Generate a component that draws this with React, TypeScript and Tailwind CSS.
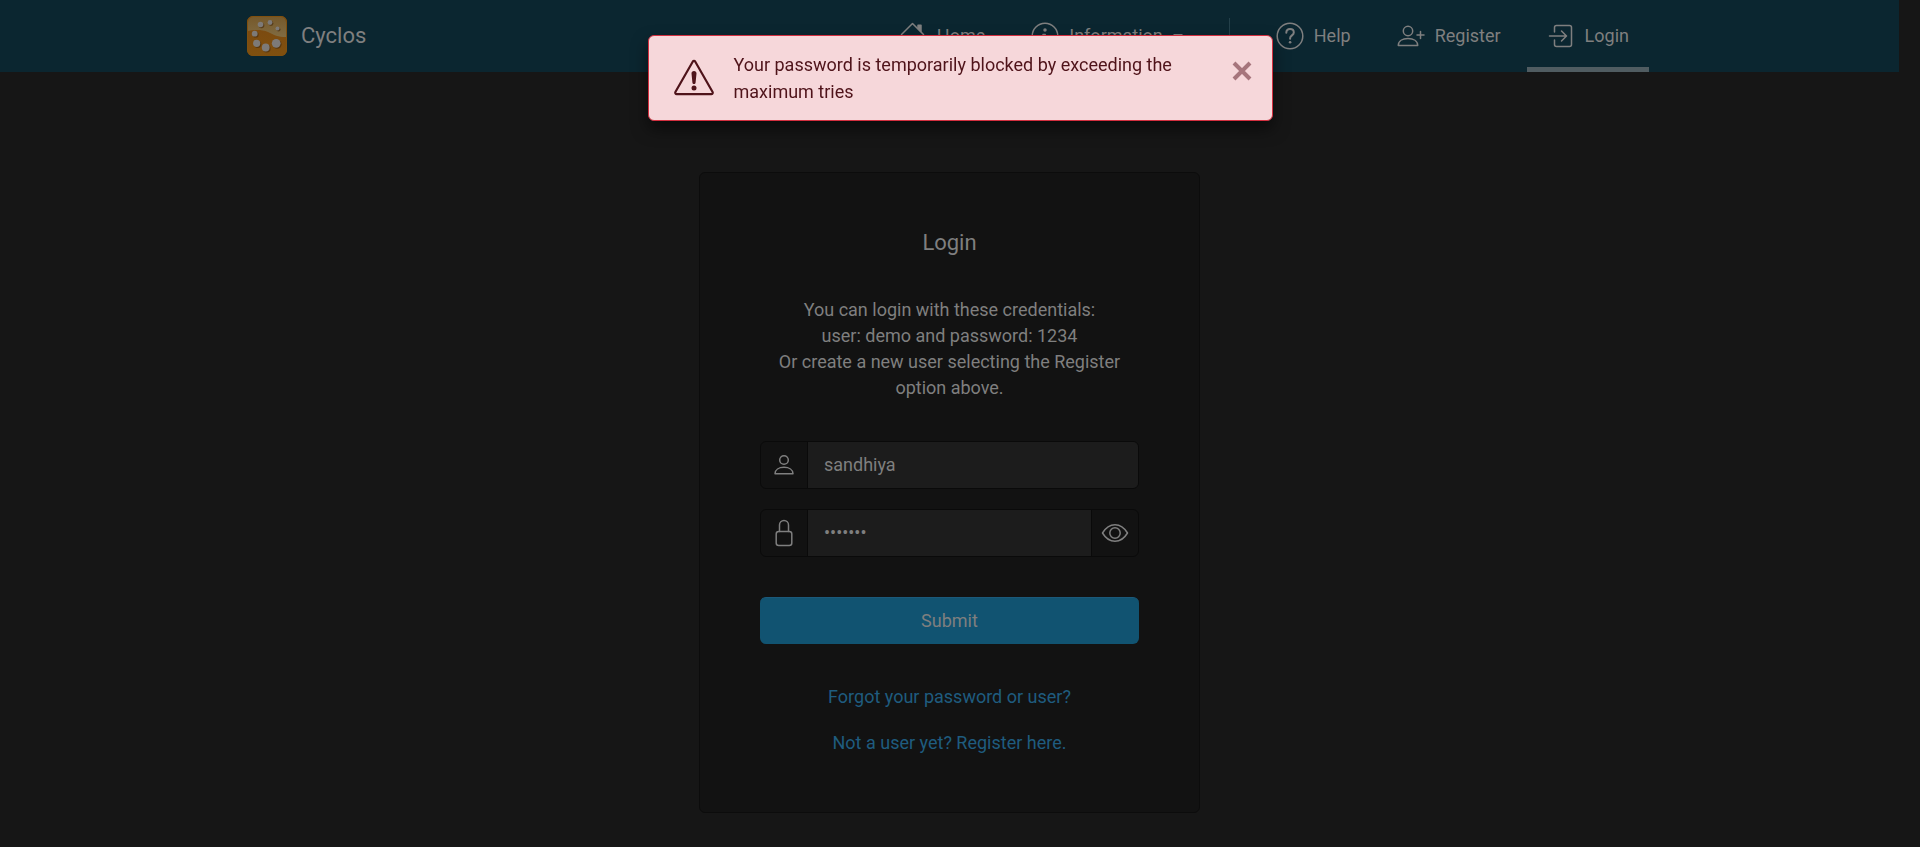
import { useState, type ReactNode } from 'react';

function Icon({ className, children }: { className: string; children: ReactNode }) {
  return (
    <svg
      viewBox="0 0 28 28"
      className={`shrink-0 ${className}`}
      fill="none"
      stroke="currentColor"
      strokeWidth="1.5"
      strokeLinecap="round"
      strokeLinejoin="round"
      aria-hidden="true"
    >
      {children}
    </svg>
  );
}

function Logo() {
  const balls = [
    [13.5, 8.5, 2.8],
    [23, 6.5, 2.4],
    [30.5, 12.5, 2],
    [7.7, 17.7, 2.9],
    [9.7, 27.3, 3.6],
    [18.7, 31.5, 3.9],
    [29.2, 27.3, 4.4],
  ];
  return (
    <svg viewBox="0 0 40 40" className="size-10 shrink-0" aria-hidden="true">
      <defs>
        <linearGradient id="logo-top" x1="0" y1="0" x2="0" y2="1">
          <stop offset="0" stopColor="#76592b" />
          <stop offset="1" stopColor="#806b42" />
        </linearGradient>
        <linearGradient id="logo-base" x1="0" y1="0" x2="0" y2="1">
          <stop offset="0.3" stopColor="#7b4a10" />
          <stop offset="1" stopColor="#80500f" />
        </linearGradient>
      </defs>
      <rect width="40" height="40" rx="6" fill="url(#logo-base)" />
      <path d="M1 15V6a5 5 0 0 1 5-5h28a5 5 0 0 1 5 5v15c-8 0-12-2-18-5C15 13.500 8 13.500 1 15z" fill="url(#logo-top)" />
      <rect x="0.5" y="0.5" width="39" height="39" rx="5.5" fill="none" stroke="#80500f" />
      {balls.map(([x, y, r]) => (
        <g key={`${x}-${y}`}>
          <circle cx={x + 1} cy={y + 1} r={r} fill="#4a2f10" opacity="0.7" />
          <circle cx={x} cy={y} r={r} fill="#7d7a78" />
        </g>
      ))}
    </svg>
  );
}

function NavItem({ icon, label, active, caret }: { icon: ReactNode; label: string; active?: boolean; caret?: boolean }) {
  return (
    <a
      href="#"
      aria-current={active ? 'page' : undefined}
      className={`flex h-18 items-center gap-2.5 border-y-[5px] border-t-transparent px-5 ${
        active ? 'border-b-[#505c61]' : 'border-b-transparent'
      }`}
    >
      <Icon className="size-7">{icon}</Icon>
      <span>{label}</span>
      {caret && (
        <svg viewBox="0 0 10 6" className="h-1.5 w-2.5" fill="currentColor" aria-hidden="true">
          <path d="M0 1h10L5 6z" />
        </svg>
      )}
    </a>
  );
}

const house = (
  <>
    <path d="M2.500 14v-1.500L13.500 1.500l11 11V14M5 14v11.500h17V14" />
    <path d="M19 6.500V3.200h3v6.300z" fill="currentColor" />
  </>
);
const info = (
  <>
    <circle cx="14" cy="14" r="12.800" />
    <path d="M12 12.500h2.200V20M11.500 20h5" />
    <circle cx="14" cy="8" r="1" fill="currentColor" />
  </>
);
const question = (
  <>
    <circle cx="14" cy="14" r="12.800" />
    <path d="M10.300 10.700c.1-2.300 1.600-3.600 3.700-3.600 2.200 0 3.800 1.400 3.800 3.300 0 3-3.700 2.900-3.700 5.900v.4" strokeWidth="2" />
    <circle cx="14.100" cy="20.300" r="1.300" fill="currentColor" stroke="none" />
  </>
);
const personPlus = (
  <>
    <circle cx="11" cy="9" r="4.700" />
    <path d="M1.300 23.500c0-4.500 4.200-7 9.700-7s9.700 2.500 9.700 7zM23.500 9.500v7M20 13h7" />
  </>
);
const boxArrow = (
  <path d="M7.500 10V5.500a2 2 0 0 1 2-2h13a2 2 0 0 1 2 2v17a2 2 0 0 1-2 2h-13a2 2 0 0 1-2-2V18M2.500 14H19M14.500 9l5 5-5 5" />
);
const person = (
  <>
    <circle cx="14" cy="9" r="4.300" />
    <path d="M5 22.800c0-4.100 3.900-6.500 9-6.500s9 2.400 9 6.500z" />
  </>
);
const lock = (
  <>
    <rect x="6.200" y="12.500" width="15.600" height="14" rx="2.500" />
    <path d="M9.500 12.500V6a4.500 4.500 0 0 1 9 0v6.500" />
  </>
);
const eye = (
  <>
    <path d="M1.500 14C4.500 9 9 5.700 14 5.700S23.500 9 26.500 14c-3 5-7.500 8.300-12.500 8.300S4.500 19 1.500 14z" />
    <circle cx="14" cy="14" r="5.200" />
  </>
);

export default function App() {
  const [user, setUser] = useState('sandhiya');
  const [password, setPassword] = useState('1234567');
  const [visible, setVisible] = useState(false);
  const [open, setOpen] = useState(true);

  return (
    <div className="min-h-screen bg-[#161616] pr-[21px] font-[Roboto,sans-serif] text-[18px] leading-[26px] text-[#7f7f7f]">
      <header className="bg-[#0b2630]">
        <div className="mx-auto flex h-18 max-w-[1405px] items-center justify-between pr-[3px]">
          <a href="#" className="flex items-center gap-3.5 text-[22px]">
            <Logo />
            Cyclos
          </a>
          <nav className="flex items-center gap-1.5">
            <NavItem icon={house} label="Home" />
            <NavItem icon={info} label="Information" caret />
            <span className="mx-5 h-9 w-px bg-[#24404a]" />
            <NavItem icon={question} label="Help" />
            <NavItem icon={personPlus} label="Register" />
            <NavItem icon={boxArrow} label="Login" active />
          </nav>
        </div>
      </header>

      <main className="mx-auto mt-25 max-w-[501px] rounded-md border border-[#0c0c0c] bg-[#121212] px-15 py-14 text-center">
        <h1 className="text-[22px] leading-7">Login</h1>
        <p className="mt-10">
          You can login with these credentials:
          <br />
          user: demo and password: 1234
          <br />
          Or create a new user selecting the Register option above.
        </p>
        <form onSubmit={(e) => e.preventDefault()} className="mt-10">
          <div className="flex h-12 overflow-hidden rounded-md border border-[#0a0a0a]">
            <label htmlFor="user" aria-label="User" className="flex w-[47px] items-center justify-center border-r border-[#0a0a0a]">
              <Icon className="size-7">{person}</Icon>
            </label>
            <input
              id="user"
              value={user}
              onChange={(e) => setUser(e.target.value)}
              className="min-w-0 flex-1 bg-[#1c1c1c] px-4 outline-none"
            />
          </div>
          <div className="mt-5 flex h-12 overflow-hidden rounded-md border border-[#0a0a0a]">
            <label htmlFor="password" aria-label="Password" className="flex w-[47px] items-center justify-center border-r border-[#0a0a0a]">
              <Icon className="size-7">{lock}</Icon>
            </label>
            <input
              id="password"
              type={visible ? 'text' : 'password'}
              value={password}
              onChange={(e) => setPassword(e.target.value)}
              className="min-w-0 flex-1 bg-[#1c1c1c] px-4 outline-none"
            />
            <button
              type="button"
              aria-label="Show password"
              onClick={() => setVisible(!visible)}
              className="flex w-[47px] items-center justify-center border-l border-[#0a0a0a]"
            >
              <Icon className="size-7">{eye}</Icon>
            </button>
          </div>
          <button type="submit" className="mt-10 h-[47px] w-full rounded-md border-t border-[#1b597a] bg-[#115371]">
            Submit
          </button>
        </form>
        <div className="mt-10 flex flex-col items-center gap-5 text-[#1f5c7f]">
          <a href="#">Forgot your password or user?</a>
          <a href="#">Not a user yet? Register here.</a>
        </div>
      </main>

      {open && (
        <div
          role="alert"
          className="fixed inset-x-0 top-[35px] mx-auto flex max-w-[625px] items-start gap-[19px] rounded-md border border-[#d32f3f] bg-[#f6d7da] py-[15px] pr-5 pl-6 leading-[27px] text-[#4f131a] shadow-[0_8px_16px_rgba(0,0,0,0.5)]"
        >
          <svg
            viewBox="0 0 42 42"
            className="size-[42px] shrink-0 self-center"
            fill="none"
            stroke="currentColor"
            strokeWidth="2.2"
            strokeLinejoin="round"
            aria-hidden="true"
          >
            <path d="M19.700 4.700a1.500 1.500 0 0 1 2.600 0l17.300 30.300a1.500 1.500 0 0 1-1.300 2.200H3.700a1.500 1.500 0 0 1-1.300-2.200z" />
            <path d="M18.500 16.500c-.1-1.400 1-2.500 2.500-2.500s2.600 1.100 2.500 2.500l-.9 9c-.1 1-.8 1.500-1.600 1.500s-1.500-.5-1.600-1.500z" fill="currentColor" stroke="none" />
            <circle cx="21" cy="31" r="2.500" fill="currentColor" stroke="none" />
          </svg>
          <p className="flex-1">Your password is temporarily blocked by exceeding the maximum tries</p>
          <button type="button" aria-label="Close" onClick={() => setOpen(false)} className="mt-2.5 text-[#a6757c]">
            <svg viewBox="0 0 20 20" className="size-5" stroke="currentColor" strokeWidth="4" aria-hidden="true">
              <path d="M2 2l16 16M18 2L2 18" />
            </svg>
          </button>
        </div>
      )}
    </div>
  );
}
